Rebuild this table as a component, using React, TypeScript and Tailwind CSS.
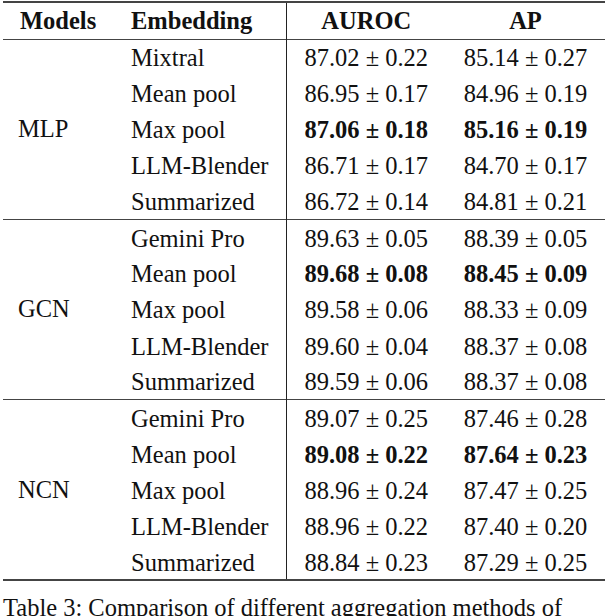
import React from "react";

type Row = { emb: string; auroc: string; ap: string; best?: boolean };
type Group = { model: string; rows: Row[] };

const groups: Group[] = [
  {
    model: "MLP",
    rows: [
      { emb: "Mixtral", auroc: "87.02 ± 0.22", ap: "85.14 ± 0.27" },
      { emb: "Mean pool", auroc: "86.95 ± 0.17", ap: "84.96 ± 0.19" },
      { emb: "Max pool", auroc: "87.06 ± 0.18", ap: "85.16 ± 0.19", best: true },
      { emb: "LLM-Blender", auroc: "86.71 ± 0.17", ap: "84.70 ± 0.17" },
      { emb: "Summarized", auroc: "86.72 ± 0.14", ap: "84.81 ± 0.21" },
    ],
  },
  {
    model: "GCN",
    rows: [
      { emb: "Gemini Pro", auroc: "89.63 ± 0.05", ap: "88.39 ± 0.05" },
      { emb: "Mean pool", auroc: "89.68 ± 0.08", ap: "88.45 ± 0.09", best: true },
      { emb: "Max pool", auroc: "89.58 ± 0.06", ap: "88.33 ± 0.09" },
      { emb: "LLM-Blender", auroc: "89.60 ± 0.04", ap: "88.37 ± 0.08" },
      { emb: "Summarized", auroc: "89.59 ± 0.06", ap: "88.37 ± 0.08" },
    ],
  },
  {
    model: "NCN",
    rows: [
      { emb: "Gemini Pro", auroc: "89.07 ± 0.25", ap: "87.46 ± 0.28" },
      { emb: "Mean pool", auroc: "89.08 ± 0.22", ap: "87.64 ± 0.23", best: true },
      { emb: "Max pool", auroc: "88.96 ± 0.24", ap: "87.47 ± 0.25" },
      { emb: "LLM-Blender", auroc: "88.96 ± 0.22", ap: "87.40 ± 0.20" },
      { emb: "Summarized", auroc: "88.84 ± 0.23", ap: "87.29 ± 0.25" },
    ],
  },
];

export default function App() {
  return (
    <div
      className="w-[610px] h-[616px] overflow-hidden bg-white text-[#111] pt-px"
      style={{ fontFamily: '"Liberation Serif", "Times New Roman", serif' }}
    >
      <table className="ml-[3px] w-[602px] border-collapse text-[24.5px] leading-none">
        <colgroup>
          <col className="w-[122px]" />
          <col className="w-[161px]" />
          <col className="w-[160px]" />
          <col className="w-[159px]" />
        </colgroup>
        <thead>
          <tr className="h-[37px] border-t-2 border-b border-[#444] font-bold">
            <th className="pl-[17px] text-left align-middle">Models</th>
            <th className="pl-[6px] text-left align-middle">Embedding</th>
            <th className="border-l border-[#222] text-center align-middle">AUROC</th>
            <th className="text-center align-middle">AP</th>
          </tr>
        </thead>
        {groups.map((g, gi) => (
          <tbody
            key={g.model}
            className={gi === groups.length - 1 ? "border-b-2 border-[#444]" : "border-b border-[#444]"}
          >
            {g.rows.map((r, ri) => (
              <tr key={r.emb} className="h-[36.1px]">
                {ri === 0 && (
                  <td rowSpan={5} className="pl-[15px] text-left align-middle">
                    {g.model}
                  </td>
                )}
                <td className="pl-[6px] pt-[2px] text-left align-middle">{r.emb}</td>
                <td
                  className={`border-l border-[#222] pt-[2px] text-center align-middle ${r.best ? "font-bold" : ""}`}
                >
                  {r.auroc}
                </td>
                <td className={`pt-[2px] text-center align-middle ${r.best ? "font-bold" : ""}`}>{r.ap}</td>
              </tr>
            ))}
          </tbody>
        ))}
      </table>
      <p className="mt-[15px] ml-[3px] whitespace-nowrap text-[24.5px] leading-none">
        Table 3: Comparison of different aggregation methods of
      </p>
    </div>
  );
}
